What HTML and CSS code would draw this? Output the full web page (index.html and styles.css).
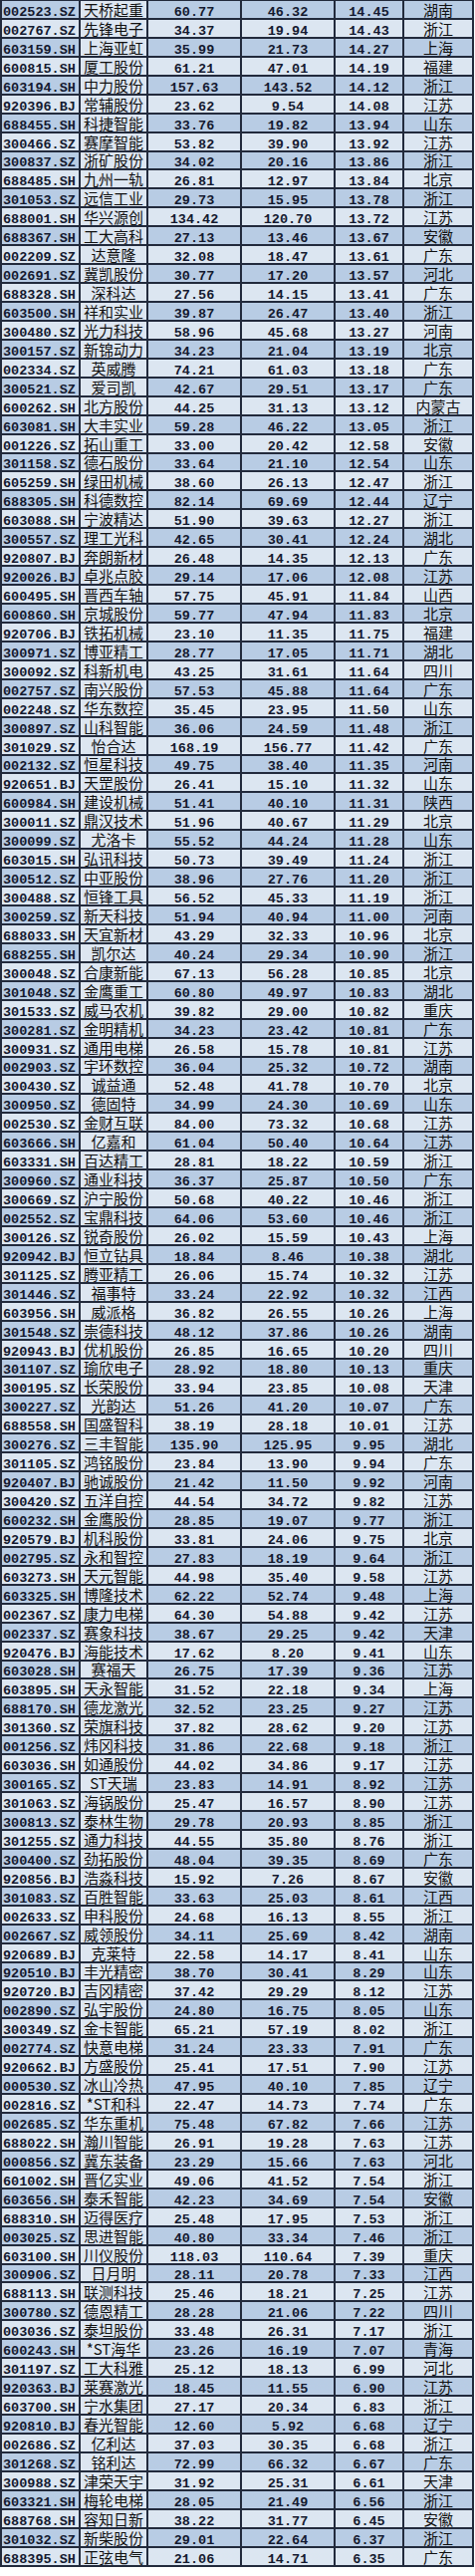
FILE: index.html
```html
<!DOCTYPE html>
<html lang="zh-CN">
<head>
<meta charset="utf-8">
<title>股票列表</title>
<link rel="stylesheet" href="styles.css">
</head>
<body>
<div class="sheet">
<div class="row"><span>002523.SZ</span><span>天桥起重</span><span>60.77</span><span>46.32</span><span>14.45</span><span>湖南</span></div>
<div class="row"><span>002767.SZ</span><span>先锋电子</span><span>34.37</span><span>19.94</span><span>14.43</span><span>浙江</span></div>
<div class="row"><span>603159.SH</span><span>上海亚虹</span><span>35.99</span><span>21.73</span><span>14.27</span><span>上海</span></div>
<div class="row"><span>600815.SH</span><span>厦工股份</span><span>61.21</span><span>47.01</span><span>14.19</span><span>福建</span></div>
<div class="row"><span>603194.SH</span><span>中力股份</span><span>157.63</span><span>143.52</span><span>14.12</span><span>浙江</span></div>
<div class="row"><span>920396.BJ</span><span>常辅股份</span><span>23.62</span><span>9.54</span><span>14.08</span><span>江苏</span></div>
<div class="row"><span>688455.SH</span><span>科捷智能</span><span>33.76</span><span>19.82</span><span>13.94</span><span>山东</span></div>
<div class="row"><span>300466.SZ</span><span>赛摩智能</span><span>53.82</span><span>39.90</span><span>13.92</span><span>江苏</span></div>
<div class="row"><span>300837.SZ</span><span>浙矿股份</span><span>34.02</span><span>20.16</span><span>13.86</span><span>浙江</span></div>
<div class="row"><span>688485.SH</span><span>九州一轨</span><span>26.81</span><span>12.97</span><span>13.84</span><span>北京</span></div>
<div class="row"><span>301053.SZ</span><span>远信工业</span><span>29.73</span><span>15.95</span><span>13.78</span><span>浙江</span></div>
<div class="row"><span>688001.SH</span><span>华兴源创</span><span>134.42</span><span>120.70</span><span>13.72</span><span>江苏</span></div>
<div class="row"><span>688367.SH</span><span>工大高科</span><span>27.13</span><span>13.46</span><span>13.67</span><span>安徽</span></div>
<div class="row"><span>002209.SZ</span><span>达意隆</span><span>32.08</span><span>18.47</span><span>13.61</span><span>广东</span></div>
<div class="row"><span>002691.SZ</span><span>冀凯股份</span><span>30.77</span><span>17.20</span><span>13.57</span><span>河北</span></div>
<div class="row"><span>688328.SH</span><span>深科达</span><span>27.56</span><span>14.15</span><span>13.41</span><span>广东</span></div>
<div class="row"><span>603500.SH</span><span>祥和实业</span><span>39.87</span><span>26.47</span><span>13.40</span><span>浙江</span></div>
<div class="row"><span>300480.SZ</span><span>光力科技</span><span>58.96</span><span>45.68</span><span>13.27</span><span>河南</span></div>
<div class="row"><span>300157.SZ</span><span>新锦动力</span><span>34.23</span><span>21.04</span><span>13.19</span><span>北京</span></div>
<div class="row"><span>002334.SZ</span><span>英威腾</span><span>74.21</span><span>61.03</span><span>13.18</span><span>广东</span></div>
<div class="row"><span>300521.SZ</span><span>爱司凯</span><span>42.67</span><span>29.51</span><span>13.17</span><span>广东</span></div>
<div class="row"><span>600262.SH</span><span>北方股份</span><span>44.25</span><span>31.13</span><span>13.12</span><span>内蒙古</span></div>
<div class="row"><span>603081.SH</span><span>大丰实业</span><span>59.28</span><span>46.22</span><span>13.05</span><span>浙江</span></div>
<div class="row"><span>001226.SZ</span><span>拓山重工</span><span>33.00</span><span>20.42</span><span>12.58</span><span>安徽</span></div>
<div class="row"><span>301158.SZ</span><span>德石股份</span><span>33.64</span><span>21.10</span><span>12.54</span><span>山东</span></div>
<div class="row"><span>605259.SH</span><span>绿田机械</span><span>38.60</span><span>26.13</span><span>12.47</span><span>浙江</span></div>
<div class="row"><span>688305.SH</span><span>科德数控</span><span>82.14</span><span>69.69</span><span>12.44</span><span>辽宁</span></div>
<div class="row"><span>603088.SH</span><span>宁波精达</span><span>51.90</span><span>39.63</span><span>12.27</span><span>浙江</span></div>
<div class="row"><span>300557.SZ</span><span>理工光科</span><span>42.65</span><span>30.41</span><span>12.24</span><span>湖北</span></div>
<div class="row"><span>920807.BJ</span><span>奔朗新材</span><span>26.48</span><span>14.35</span><span>12.13</span><span>广东</span></div>
<div class="row"><span>920026.BJ</span><span>卓兆点胶</span><span>29.14</span><span>17.06</span><span>12.08</span><span>江苏</span></div>
<div class="row"><span>600495.SH</span><span>晋西车轴</span><span>57.75</span><span>45.91</span><span>11.84</span><span>山西</span></div>
<div class="row"><span>600860.SH</span><span>京城股份</span><span>59.77</span><span>47.94</span><span>11.83</span><span>北京</span></div>
<div class="row"><span>920706.BJ</span><span>铁拓机械</span><span>23.10</span><span>11.35</span><span>11.75</span><span>福建</span></div>
<div class="row"><span>300971.SZ</span><span>博亚精工</span><span>28.77</span><span>17.05</span><span>11.71</span><span>湖北</span></div>
<div class="row"><span>300092.SZ</span><span>科新机电</span><span>43.25</span><span>31.61</span><span>11.64</span><span>四川</span></div>
<div class="row"><span>002757.SZ</span><span>南兴股份</span><span>57.53</span><span>45.88</span><span>11.64</span><span>广东</span></div>
<div class="row"><span>002248.SZ</span><span>华东数控</span><span>35.45</span><span>23.95</span><span>11.50</span><span>山东</span></div>
<div class="row"><span>300897.SZ</span><span>山科智能</span><span>36.06</span><span>24.59</span><span>11.48</span><span>浙江</span></div>
<div class="row"><span>301029.SZ</span><span>怡合达</span><span>168.19</span><span>156.77</span><span>11.42</span><span>广东</span></div>
<div class="row"><span>002132.SZ</span><span>恒星科技</span><span>49.75</span><span>38.40</span><span>11.35</span><span>河南</span></div>
<div class="row"><span>920651.BJ</span><span>天罡股份</span><span>26.41</span><span>15.10</span><span>11.32</span><span>山东</span></div>
<div class="row"><span>600984.SH</span><span>建设机械</span><span>51.41</span><span>40.10</span><span>11.31</span><span>陕西</span></div>
<div class="row"><span>300011.SZ</span><span>鼎汉技术</span><span>51.96</span><span>40.67</span><span>11.29</span><span>北京</span></div>
<div class="row"><span>300099.SZ</span><span>尤洛卡</span><span>55.52</span><span>44.24</span><span>11.28</span><span>山东</span></div>
<div class="row"><span>603015.SH</span><span>弘讯科技</span><span>50.73</span><span>39.49</span><span>11.24</span><span>浙江</span></div>
<div class="row"><span>300512.SZ</span><span>中亚股份</span><span>38.96</span><span>27.76</span><span>11.20</span><span>浙江</span></div>
<div class="row"><span>300488.SZ</span><span>恒锋工具</span><span>56.52</span><span>45.33</span><span>11.19</span><span>浙江</span></div>
<div class="row"><span>300259.SZ</span><span>新天科技</span><span>51.94</span><span>40.94</span><span>11.00</span><span>河南</span></div>
<div class="row"><span>688033.SH</span><span>天宜新材</span><span>43.29</span><span>32.33</span><span>10.96</span><span>北京</span></div>
<div class="row"><span>688255.SH</span><span>凯尔达</span><span>40.24</span><span>29.34</span><span>10.90</span><span>浙江</span></div>
<div class="row"><span>300048.SZ</span><span>合康新能</span><span>67.13</span><span>56.28</span><span>10.85</span><span>北京</span></div>
<div class="row"><span>301048.SZ</span><span>金鹰重工</span><span>60.80</span><span>49.97</span><span>10.83</span><span>湖北</span></div>
<div class="row"><span>301533.SZ</span><span>威马农机</span><span>39.82</span><span>29.00</span><span>10.82</span><span>重庆</span></div>
<div class="row"><span>300281.SZ</span><span>金明精机</span><span>34.23</span><span>23.42</span><span>10.81</span><span>广东</span></div>
<div class="row"><span>300931.SZ</span><span>通用电梯</span><span>26.58</span><span>15.78</span><span>10.81</span><span>江苏</span></div>
<div class="row"><span>002903.SZ</span><span>宇环数控</span><span>36.04</span><span>25.32</span><span>10.72</span><span>湖南</span></div>
<div class="row"><span>300430.SZ</span><span>诚益通</span><span>52.48</span><span>41.78</span><span>10.70</span><span>北京</span></div>
<div class="row"><span>300950.SZ</span><span>德固特</span><span>34.99</span><span>24.30</span><span>10.69</span><span>山东</span></div>
<div class="row"><span>002530.SZ</span><span>金财互联</span><span>84.00</span><span>73.32</span><span>10.68</span><span>江苏</span></div>
<div class="row"><span>603666.SH</span><span>亿嘉和</span><span>61.04</span><span>50.40</span><span>10.64</span><span>江苏</span></div>
<div class="row"><span>603331.SH</span><span>百达精工</span><span>28.81</span><span>18.22</span><span>10.59</span><span>浙江</span></div>
<div class="row"><span>300960.SZ</span><span>通业科技</span><span>36.37</span><span>25.87</span><span>10.50</span><span>广东</span></div>
<div class="row"><span>300669.SZ</span><span>沪宁股份</span><span>50.68</span><span>40.22</span><span>10.46</span><span>浙江</span></div>
<div class="row"><span>002552.SZ</span><span>宝鼎科技</span><span>64.06</span><span>53.60</span><span>10.46</span><span>浙江</span></div>
<div class="row"><span>300126.SZ</span><span>锐奇股份</span><span>26.02</span><span>15.59</span><span>10.43</span><span>上海</span></div>
<div class="row"><span>920942.BJ</span><span>恒立钻具</span><span>18.84</span><span>8.46</span><span>10.38</span><span>湖北</span></div>
<div class="row"><span>301125.SZ</span><span>腾亚精工</span><span>26.06</span><span>15.74</span><span>10.32</span><span>江苏</span></div>
<div class="row"><span>301446.SZ</span><span>福事特</span><span>33.24</span><span>22.92</span><span>10.32</span><span>江西</span></div>
<div class="row"><span>603956.SH</span><span>威派格</span><span>36.82</span><span>26.55</span><span>10.26</span><span>上海</span></div>
<div class="row"><span>301548.SZ</span><span>崇德科技</span><span>48.12</span><span>37.86</span><span>10.26</span><span>湖南</span></div>
<div class="row"><span>920943.BJ</span><span>优机股份</span><span>26.85</span><span>16.65</span><span>10.20</span><span>四川</span></div>
<div class="row"><span>301107.SZ</span><span>瑜欣电子</span><span>28.92</span><span>18.80</span><span>10.13</span><span>重庆</span></div>
<div class="row"><span>300195.SZ</span><span>长荣股份</span><span>33.94</span><span>23.85</span><span>10.08</span><span>天津</span></div>
<div class="row"><span>300227.SZ</span><span>光韵达</span><span>51.26</span><span>41.20</span><span>10.07</span><span>广东</span></div>
<div class="row"><span>688558.SH</span><span>国盛智科</span><span>38.19</span><span>28.18</span><span>10.01</span><span>江苏</span></div>
<div class="row"><span>300276.SZ</span><span>三丰智能</span><span>135.90</span><span>125.95</span><span>9.95</span><span>湖北</span></div>
<div class="row"><span>301105.SZ</span><span>鸿铭股份</span><span>23.84</span><span>13.90</span><span>9.94</span><span>广东</span></div>
<div class="row"><span>920407.BJ</span><span>驰诚股份</span><span>21.42</span><span>11.50</span><span>9.92</span><span>河南</span></div>
<div class="row"><span>300420.SZ</span><span>五洋自控</span><span>44.54</span><span>34.72</span><span>9.82</span><span>江苏</span></div>
<div class="row"><span>600232.SH</span><span>金鹰股份</span><span>28.85</span><span>19.07</span><span>9.77</span><span>浙江</span></div>
<div class="row"><span>920579.BJ</span><span>机科股份</span><span>33.81</span><span>24.06</span><span>9.75</span><span>北京</span></div>
<div class="row"><span>002795.SZ</span><span>永和智控</span><span>27.83</span><span>18.19</span><span>9.64</span><span>浙江</span></div>
<div class="row"><span>603273.SH</span><span>天元智能</span><span>44.98</span><span>35.40</span><span>9.58</span><span>江苏</span></div>
<div class="row"><span>603325.SH</span><span>博隆技术</span><span>62.22</span><span>52.74</span><span>9.48</span><span>上海</span></div>
<div class="row"><span>002367.SZ</span><span>康力电梯</span><span>64.30</span><span>54.88</span><span>9.42</span><span>江苏</span></div>
<div class="row"><span>002337.SZ</span><span>赛象科技</span><span>38.67</span><span>29.25</span><span>9.42</span><span>天津</span></div>
<div class="row"><span>920476.BJ</span><span>海能技术</span><span>17.62</span><span>8.20</span><span>9.41</span><span>山东</span></div>
<div class="row"><span>603028.SH</span><span>赛福天</span><span>26.75</span><span>17.39</span><span>9.36</span><span>江苏</span></div>
<div class="row"><span>603895.SH</span><span>天永智能</span><span>31.52</span><span>22.18</span><span>9.34</span><span>上海</span></div>
<div class="row"><span>688170.SH</span><span>德龙激光</span><span>32.52</span><span>23.25</span><span>9.27</span><span>江苏</span></div>
<div class="row"><span>301360.SZ</span><span>荣旗科技</span><span>37.82</span><span>28.62</span><span>9.20</span><span>江苏</span></div>
<div class="row"><span>001256.SZ</span><span>炜冈科技</span><span>31.86</span><span>22.68</span><span>9.18</span><span>浙江</span></div>
<div class="row"><span>603036.SH</span><span>如通股份</span><span>44.02</span><span>34.86</span><span>9.17</span><span>江苏</span></div>
<div class="row"><span>300165.SZ</span><span>ST天瑞</span><span>23.83</span><span>14.91</span><span>8.92</span><span>江苏</span></div>
<div class="row"><span>301063.SZ</span><span>海锅股份</span><span>25.47</span><span>16.57</span><span>8.90</span><span>江苏</span></div>
<div class="row"><span>300813.SZ</span><span>泰林生物</span><span>29.78</span><span>20.93</span><span>8.85</span><span>浙江</span></div>
<div class="row"><span>301255.SZ</span><span>通力科技</span><span>44.55</span><span>35.80</span><span>8.76</span><span>浙江</span></div>
<div class="row"><span>300400.SZ</span><span>劲拓股份</span><span>48.04</span><span>39.35</span><span>8.69</span><span>广东</span></div>
<div class="row"><span>920856.BJ</span><span>浩淼科技</span><span>15.92</span><span>7.26</span><span>8.67</span><span>安徽</span></div>
<div class="row"><span>301083.SZ</span><span>百胜智能</span><span>33.63</span><span>25.03</span><span>8.61</span><span>江西</span></div>
<div class="row"><span>002633.SZ</span><span>申科股份</span><span>24.68</span><span>16.13</span><span>8.55</span><span>浙江</span></div>
<div class="row"><span>002667.SZ</span><span>威领股份</span><span>34.11</span><span>25.69</span><span>8.42</span><span>湖南</span></div>
<div class="row"><span>920689.BJ</span><span>克莱特</span><span>22.58</span><span>14.17</span><span>8.41</span><span>山东</span></div>
<div class="row"><span>920510.BJ</span><span>丰光精密</span><span>38.70</span><span>30.41</span><span>8.29</span><span>山东</span></div>
<div class="row"><span>920720.BJ</span><span>吉冈精密</span><span>37.42</span><span>29.29</span><span>8.12</span><span>江苏</span></div>
<div class="row"><span>002890.SZ</span><span>弘宇股份</span><span>24.80</span><span>16.75</span><span>8.05</span><span>山东</span></div>
<div class="row"><span>300349.SZ</span><span>金卡智能</span><span>65.21</span><span>57.19</span><span>8.02</span><span>浙江</span></div>
<div class="row"><span>002774.SZ</span><span>快意电梯</span><span>31.24</span><span>23.33</span><span>7.91</span><span>广东</span></div>
<div class="row"><span>920662.BJ</span><span>方盛股份</span><span>25.41</span><span>17.51</span><span>7.90</span><span>江苏</span></div>
<div class="row"><span>000530.SZ</span><span>冰山冷热</span><span>47.95</span><span>40.10</span><span>7.85</span><span>辽宁</span></div>
<div class="row"><span>002816.SZ</span><span>*ST和科</span><span>22.47</span><span>14.73</span><span>7.74</span><span>广东</span></div>
<div class="row"><span>002685.SZ</span><span>华东重机</span><span>75.48</span><span>67.82</span><span>7.66</span><span>江苏</span></div>
<div class="row"><span>688022.SH</span><span>瀚川智能</span><span>26.91</span><span>19.28</span><span>7.63</span><span>江苏</span></div>
<div class="row"><span>000856.SZ</span><span>冀东装备</span><span>23.29</span><span>15.66</span><span>7.63</span><span>河北</span></div>
<div class="row"><span>601002.SH</span><span>晋亿实业</span><span>49.06</span><span>41.52</span><span>7.54</span><span>浙江</span></div>
<div class="row"><span>603656.SH</span><span>泰禾智能</span><span>42.23</span><span>34.69</span><span>7.54</span><span>安徽</span></div>
<div class="row"><span>688310.SH</span><span>迈得医疗</span><span>25.48</span><span>17.95</span><span>7.53</span><span>浙江</span></div>
<div class="row"><span>003025.SZ</span><span>思进智能</span><span>40.80</span><span>33.34</span><span>7.46</span><span>浙江</span></div>
<div class="row"><span>603100.SH</span><span>川仪股份</span><span>118.03</span><span>110.64</span><span>7.39</span><span>重庆</span></div>
<div class="row"><span>300906.SZ</span><span>日月明</span><span>28.11</span><span>20.78</span><span>7.33</span><span>江西</span></div>
<div class="row"><span>688113.SH</span><span>联测科技</span><span>25.46</span><span>18.21</span><span>7.25</span><span>江苏</span></div>
<div class="row"><span>300780.SZ</span><span>德恩精工</span><span>28.28</span><span>21.06</span><span>7.22</span><span>四川</span></div>
<div class="row"><span>003036.SZ</span><span>泰坦股份</span><span>33.48</span><span>26.31</span><span>7.17</span><span>浙江</span></div>
<div class="row"><span>600243.SH</span><span>*ST海华</span><span>23.26</span><span>16.19</span><span>7.07</span><span>青海</span></div>
<div class="row"><span>301197.SZ</span><span>工大科雅</span><span>25.12</span><span>18.13</span><span>6.99</span><span>河北</span></div>
<div class="row"><span>920363.BJ</span><span>莱赛激光</span><span>18.45</span><span>11.55</span><span>6.90</span><span>江苏</span></div>
<div class="row"><span>603700.SH</span><span>宁水集团</span><span>27.17</span><span>20.34</span><span>6.83</span><span>浙江</span></div>
<div class="row"><span>920810.BJ</span><span>春光智能</span><span>12.60</span><span>5.92</span><span>6.68</span><span>辽宁</span></div>
<div class="row"><span>002686.SZ</span><span>亿利达</span><span>37.03</span><span>30.35</span><span>6.68</span><span>浙江</span></div>
<div class="row"><span>301268.SZ</span><span>铭利达</span><span>72.99</span><span>66.32</span><span>6.67</span><span>广东</span></div>
<div class="row"><span>300988.SZ</span><span>津荣天宇</span><span>31.92</span><span>25.31</span><span>6.61</span><span>天津</span></div>
<div class="row"><span>603321.SH</span><span>梅轮电梯</span><span>28.05</span><span>21.49</span><span>6.56</span><span>浙江</span></div>
<div class="row"><span>688768.SH</span><span>容知日新</span><span>38.22</span><span>31.77</span><span>6.45</span><span>安徽</span></div>
<div class="row"><span>301032.SZ</span><span>新柴股份</span><span>29.01</span><span>22.64</span><span>6.37</span><span>浙江</span></div>
<div class="row"><span>688395.SH</span><span>正弦电气</span><span>21.06</span><span>14.71</span><span>6.35</span><span>广东</span></div>
</div>
</body>
</html>
```

FILE: styles.css
```css
html, body {
  margin: 0;
  padding: 0;
  background: #ffffff;
}

.sheet {
  width: 476px;
  box-sizing: border-box;
  display: flex;
  flex-direction: column;
  gap: 2px;
  padding: 1px 2px 2px 2px;
  background: #222a3c;
}

.row {
  display: grid;
  grid-template-columns: 77px 66px 92px 92px 67px 68px;
  column-gap: 2px;
  height: 16.95px;
}

.row > span {
  display: flex;
  align-items: flex-end;
  justify-content: center;
  white-space: nowrap;
  color: #141a30;
  font-family: "Liberation Mono", "DejaVu Sans Mono", monospace;
  font-weight: bold;
  font-size: 13.5px;
  line-height: 11px;
}

.row:nth-child(odd) > span {
  background: #b8cce4;
}

.row:nth-child(even) > span {
  background: #dce6f1;
}

.row > span:nth-child(1) {
  justify-content: flex-start;
  padding-left: 1px;
}

.row > span:nth-child(2),
.row > span:nth-child(6) {
  font-family: "Noto Sans CJK SC", "Noto Sans", sans-serif;
  font-weight: normal;
  font-size: 15px;
  line-height: 16px;
  color: #111111;
}

.row > span:nth-child(2) {
  background: #dde6f1;
}
```
